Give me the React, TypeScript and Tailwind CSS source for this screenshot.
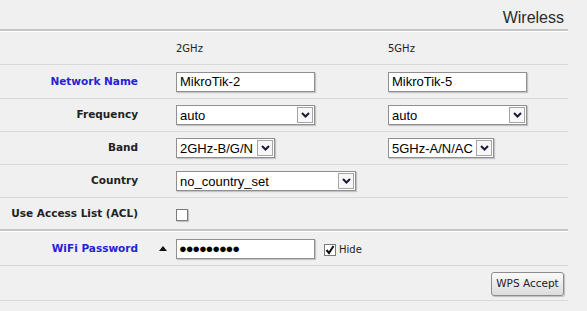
import type { ReactNode } from 'react'

function Chevron() {
  return (
    <svg width="9" height="6" viewBox="0 0 9 6">
      <path d="M1 1 L4.5 4.5 L8 1" fill="none" stroke="#1b1b3a" strokeWidth="2" />
    </svg>
  )
}

function Select({ value, width }: { value: string; width: string }) {
  return (
    <div
      className={`${width} relative flex h-[20px] items-center border border-[#8f8f8f] bg-white pl-[3px] shadow-[1px_1px_1px_#c4c4c4]`}
    >
      <span className="font-['Liberation_Sans',Arial,sans-serif] text-[13px] leading-none text-black">{value}</span>
      <span className="absolute right-[1px] top-[1px] flex h-[16px] w-[16px] items-center justify-center border border-[#a5a5a5] bg-[#f7f7f7]">
        <Chevron />
      </span>
    </div>
  )
}

function TextInput({ value }: { value: string }) {
  return (
    <div className="flex h-[20px] w-[139px] items-center border border-[#8f8f8f] bg-white pl-[3px] shadow-[1px_1px_1px_#c4c4c4]">
      <span className="font-['Liberation_Sans',Arial,sans-serif] text-[13px] leading-none text-black">{value}</span>
    </div>
  )
}

interface RowProps {
  label?: string
  blue?: boolean
  height: string
  border?: boolean
  marker?: ReactNode
  col1?: ReactNode
  col2?: ReactNode
}

function Row({ label, blue, height, border = true, marker, col1, col2 }: RowProps) {
  return (
    <div className={`flex ${height} items-center ${border ? 'border-b border-[#d9d9d9]' : ''}`}>
      <div
        className={`w-[138px] text-right font-['DejaVu_Sans',Verdana,sans-serif] text-[10.5px] font-bold ${
          blue ? 'text-[#2424d6]' : 'text-[#222]'
        }`}
      >
        {label}
      </div>
      <div className="flex w-[38px] justify-end pr-[9px]">{marker}</div>
      <div className="flex w-[212px] items-center">{col1}</div>
      <div className="flex flex-1 items-center">{col2}</div>
    </div>
  )
}

export default function App() {
  return (
    <div className="h-[311px] w-[587px] overflow-hidden bg-[#f0f0f0]">
      <div className="w-[568px]">
        <div className="h-[29px] pr-[4px] pt-[10px] text-right font-['Liberation_Sans',Arial,sans-serif] text-[16px] leading-[16px] text-[#2b2b2b]">
          Wireless
        </div>
        <div className="h-[2px] bg-[#c6c6c6]" />
        <div className="h-[1px] bg-white" />

        <Row
          height="h-[33px]"
          col1={<span className="font-['DejaVu_Sans',Verdana,sans-serif] text-[10px] text-[#222]">2GHz</span>}
          col2={<span className="font-['DejaVu_Sans',Verdana,sans-serif] text-[10px] text-[#222]">5GHz</span>}
        />
        <Row
          label="Network Name"
          blue
          height="h-[34px]"
          col1={<TextInput value="MikroTik-2" />}
          col2={<TextInput value="MikroTik-5" />}
        />
        <Row
          label="Frequency"
          height="h-[33px]"
          col1={<Select value="auto" width="w-[139px]" />}
          col2={<Select value="auto" width="w-[139px]" />}
        />
        <Row
          label="Band"
          height="h-[33px]"
          col1={<Select value="2GHz-B/G/N" width="w-[99px]" />}
          col2={<Select value="5GHz-A/N/AC" width="w-[106px]" />}
        />
        <Row label="Country" height="h-[33px]" col1={<Select value="no_country_set" width="w-[180px]" />} />
        <Row
          label="Use Access List (ACL)"
          height="h-[31px]"
          border={false}
          col1={<div className="mt-[2px] h-[12px] w-[12px] border border-[#7a7a7a] bg-white shadow-[1px_1px_1px_#c4c4c4]" />}
        />
        <div className="h-[2px] bg-[#c6c6c6]" />
        <div className="h-[1px] bg-white" />

        <Row
          label="WiFi Password"
          blue
          height="h-[34px]"
          marker={
            <svg width="8" height="5" viewBox="0 0 8 5">
              <polygon points="4,0 8,5 0,5" fill="#111" />
            </svg>
          }
          col1={
            <div className="flex items-center">
              <div className="flex h-[20px] w-[139px] items-center border border-[#8f8f8f] bg-white pl-[2px] shadow-[1px_1px_1px_#c4c4c4]">
                <span className="font-['Liberation_Sans',Arial,sans-serif] text-[13px] leading-none tracking-[-1.2px] text-black">
                  ●●●●●●●●●
                </span>
              </div>
              <div className="ml-[9px] mt-[2px] flex h-[12px] w-[12px] items-center justify-center border border-[#7a7a7a] bg-white">
                <svg width="10" height="10" viewBox="0 0 10 10">
                  <path d="M1.5 5 L4 8 L8.5 1" fill="none" stroke="#111" strokeWidth="2" />
                </svg>
              </div>
              <span className="ml-[3px] mt-[1px] font-['DejaVu_Sans',Verdana,sans-serif] text-[10px] text-[#222]">Hide</span>
            </div>
          }
        />
        <div className="flex h-[35px] items-center justify-end border-b border-[#d9d9d9] pr-[4px]">
          <button className="mt-[2px] h-[24px] w-[73px] rounded-[3px] border border-[#8c8c8c] bg-gradient-to-b from-[#fafafa] to-[#dcdcdc] font-['DejaVu_Sans',Verdana,sans-serif] text-[10.5px] text-[#222] shadow-[1px_1px_1px_#bdbdbd]">
            WPS Accept
          </button>
        </div>
      </div>
    </div>
  )
}
